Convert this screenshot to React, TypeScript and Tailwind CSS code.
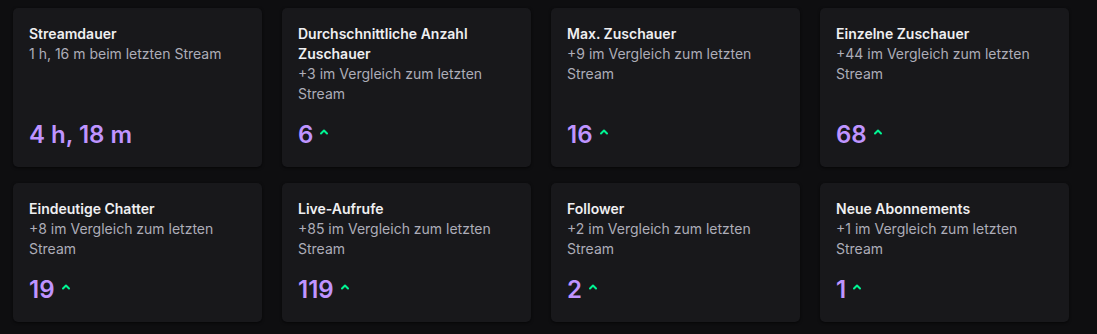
import React from "react";

type Stat = { title: string; sub: string; value: string; up?: boolean };

const stats: Stat[] = [
  { title: "Streamdauer", sub: "1 h, 16 m beim letzten Stream", value: "4 h, 18 m" },
  { title: "Durchschnittliche Anzahl Zuschauer", sub: "+3 im Vergleich zum letzten Stream", value: "6", up: true },
  { title: "Max. Zuschauer", sub: "+9 im Vergleich zum letzten Stream", value: "16", up: true },
  { title: "Einzelne Zuschauer", sub: "+44 im Vergleich zum letzten Stream", value: "68", up: true },
  { title: "Eindeutige Chatter", sub: "+8 im Vergleich zum letzten Stream", value: "19", up: true },
  { title: "Live-Aufrufe", sub: "+85 im Vergleich zum letzten Stream", value: "119", up: true },
  { title: "Follower", sub: "+2 im Vergleich zum letzten Stream", value: "2", up: true },
  { title: "Neue Abonnements", sub: "+1 im Vergleich zum letzten Stream", value: "1", up: true },
];

function Chevron() {
  return (
    <svg width="10" height="8" viewBox="0 0 10 8" className="ml-[6px] mt-[-6px]">
      <path d="M2 5.5 L5 2.5 L8 5.5" fill="none" stroke="#00f593" strokeWidth="2" strokeLinecap="round" strokeLinejoin="round" />
    </svg>
  );
}

function Card({ s }: { s: Stat }) {
  return (
    <div className="flex flex-col rounded-[5px] bg-[#18181b] p-4 shadow-[0_1px_3px_rgba(0,0,0,0.6)]">
      <div className="text-[14px] font-semibold leading-5 text-[#efeff1]">{s.title}</div>
      <div className="text-[14px] leading-5 text-[#adadb8]">{s.sub}</div>
      <div className="mt-auto flex items-center pt-[15px]">
        <span className="text-[24px] font-semibold leading-8 text-[#bf94ff]">{s.value}</span>
        {s.up && <Chevron />}
      </div>
    </div>
  );
}

export default function App() {
  return (
    <div
      className="min-h-[334px] w-[1097px] bg-[#0e0e10] pl-[13px] pt-2"
      style={{ fontFamily: "Inter, 'Noto Sans', sans-serif" }}
    >
      <div className="grid grid-cols-[repeat(4,249px)] gap-x-5 gap-y-4">
        {stats.map((s) => (
          <Card key={s.title} s={s} />
        ))}
      </div>
    </div>
  );
}
